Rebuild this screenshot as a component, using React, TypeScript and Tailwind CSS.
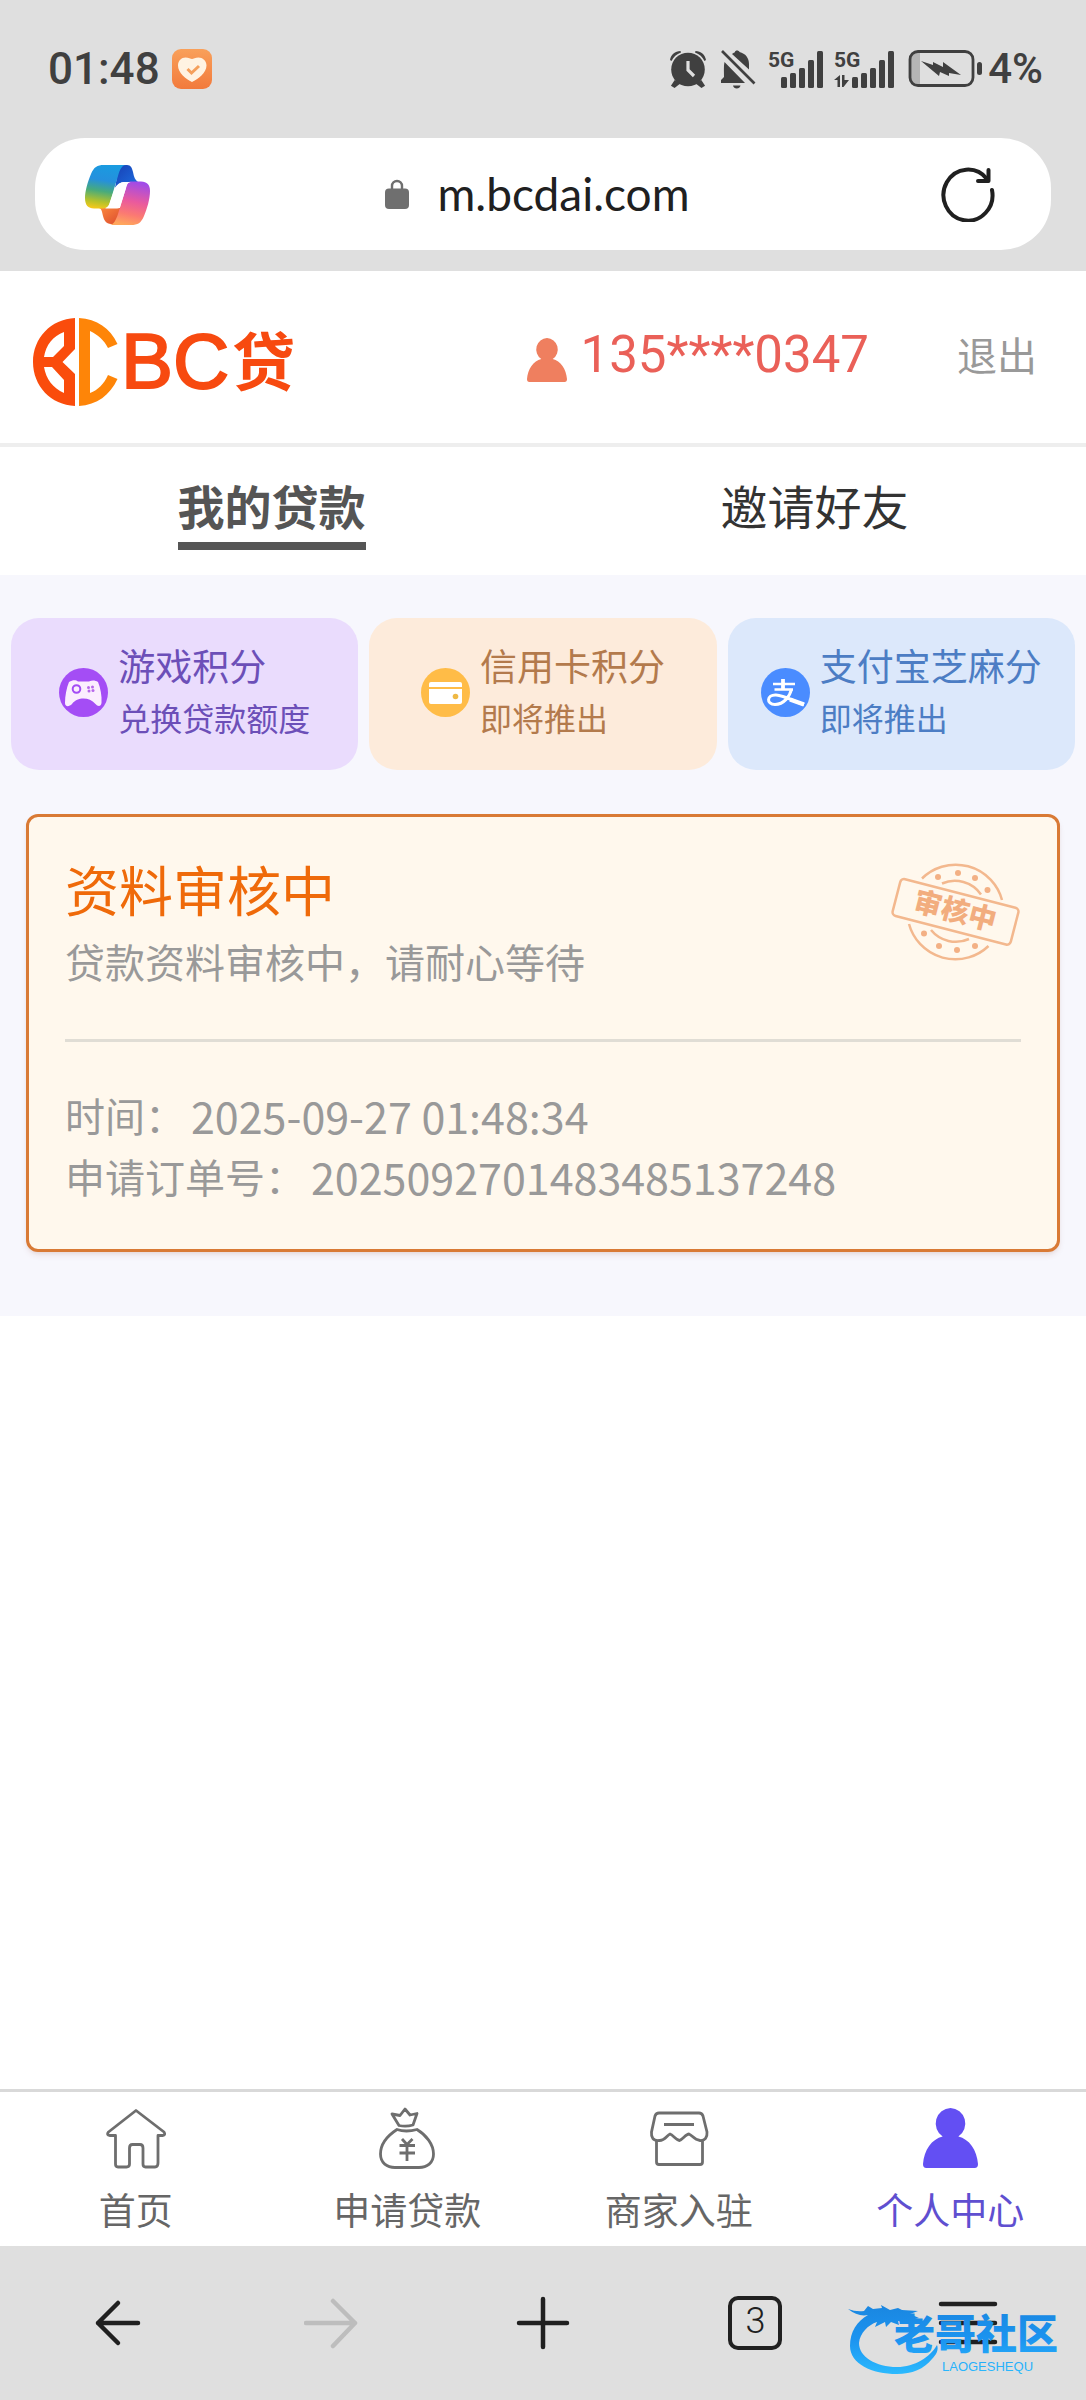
import type { ReactNode } from "react";

const CJK = "font-['Noto_Sans_CJK_SC',sans-serif]";

function HeartBadge() {
  return (
    <svg width="40" height="40" viewBox="0 0 40 40" aria-hidden="true">
      <defs>
        <linearGradient id="badge" x1="0" y1="0" x2="0" y2="1">
          <stop offset="0" stopColor="#f9a05a" />
          <stop offset="1" stopColor="#f27a3c" />
        </linearGradient>
      </defs>
      <rect width="40" height="40" rx="9" fill="url(#badge)" />
      <path d="M20 33C14 30 6 24 6 16.500C6 11.500 9.500 8.500 13.500 8.500C16.500 8.500 18.800 10 20 10C21.200 10 23.500 8.500 26.500 8.500C30.500 8.500 34.500 11.500 34.500 16.500C34.500 24 26 30 20 33Z" fill="#fff3e2" />
      <path d="M15.500 20L19.500 24L27 17" fill="none" stroke="#f5a05c" strokeWidth="3" />
    </svg>
  );
}

function AlarmIcon() {
  return (
    <svg width="36" height="38" viewBox="0 0 36 38" fill="#404040" aria-hidden="true">
      <circle cx="18" cy="19.500" r="16.800" />
      <path d="M0 10C1 4.500 5 1 10.500 1L11 2.500C6.500 4 3.500 7 1.500 11Z" />
      <path d="M36 10C35 4.500 31 1 25.500 1L25 2.500C29.500 4 32.500 7 34.500 11Z" />
      <path d="M5 31L2 35.500L4.500 37L9 33.500ZM31 31L34 35.500L31.500 37L27 33.500Z" stroke="#404040" strokeWidth="1.500" />
      <path d="M18 11V20L24 26" fill="none" stroke="#dfdfdf" strokeWidth="3.200" />
    </svg>
  );
}

function MutedBellIcon() {
  return (
    <svg width="36" height="40" viewBox="0 0 36 40" fill="#404040" aria-hidden="true">
      <path d="M12 5C13.500 4 14.500 3.500 15 3C15 1 19 1 19.500 3C25.500 4.500 29 9 29 15V20.500Z" />
      <path d="M4.500 13L25 34H1V31L4 28C4 23 3.500 17 4.500 13Z" />
      <path d="M13 36.500H20.500C20 40.500 13.500 40.500 13 36.500Z" />
      <path d="M2 2L34.500 34.500" stroke="#404040" strokeWidth="2.600" />
    </svg>
  );
}

function SignalIcon({ data }: { data?: boolean }) {
  return (
    <svg width={data ? 60 : 56} height="40" viewBox={data ? "0 0 60 40" : "0 0 56 40"} fill="#404040" className="overflow-visible" aria-hidden="true">
      <text x="0" y="18" fontSize="21" fontWeight="700" className="font-['Roboto',sans-serif]">5G</text>
      <g transform={data ? "translate(5 0)" : undefined}>
        <rect x="13" y="28" width="6" height="11" rx="1.500" />
        <rect x="22" y="24" width="6" height="15" rx="1.500" />
        <rect x="31" y="19" width="6" height="20" rx="1.500" />
        <rect x="40" y="11" width="6" height="28" rx="1.500" />
        <rect x="49" y="2" width="6" height="37" rx="1.500" />
      </g>
      {data && <path d="M0 31L6 26V38H3.500V31ZM8 26H10.500V31H15L9.500 38H8Z" />}
    </svg>
  );
}

function BatteryIcon() {
  return (
    <svg width="76" height="38" viewBox="0 0 76 38" aria-hidden="true">
      <path d="M9 2H12V35H9Q3 33 3 28V9Q3 3 9 2Z" fill="#b5b5b5" />
      <rect x="2" y="1.500" width="63" height="34" rx="8" fill="none" stroke="#404040" strokeWidth="2.800" />
      <rect x="69" y="12" width="5" height="13" rx="2.500" fill="#404040" />
      <path d="M13 11L25 15V12L35 17V12L53 25L41 23V26L32 22L31 26Z" fill="#404040" />
    </svg>
  );
}

function AssistantIcon() {
  return (
    <svg width="65" height="61" viewBox="0 0 65 61" aria-hidden="true">
      <defs>
        <linearGradient id="ribbonA" x1="0.500" y1="0" x2="0.350" y2="1">
          <stop offset="0" stopColor="#1a9be0" />
          <stop offset="0.350" stopColor="#2590dd" />
          <stop offset="0.600" stopColor="#48ab7c" />
          <stop offset="0.850" stopColor="#b6c22a" />
          <stop offset="1" stopColor="#f2c81c" />
        </linearGradient>
        <linearGradient id="ribbonB" x1="0.600" y1="0" x2="0.400" y2="1">
          <stop offset="0" stopColor="#a04be8" />
          <stop offset="0.450" stopColor="#ea5a9d" />
          <stop offset="0.750" stopColor="#fb7a72" />
          <stop offset="1" stopColor="#ffa75c" />
        </linearGradient>
        <linearGradient id="foldA" x1="0" y1="0" x2="1" y2="1">
          <stop offset="0" stopColor="#1840b5" />
          <stop offset="1" stopColor="#1d6fe0" />
        </linearGradient>
        <linearGradient id="foldB" x1="0" y1="0" x2="1" y2="1">
          <stop offset="0" stopColor="#ff9040" />
          <stop offset="1" stopColor="#d9452c" />
        </linearGradient>
      </defs>
      <path d="M34 1H42C46 1 47 4 48 8C49 13 50 16 53 18H40C36 18 34 19 30 24Z" fill="url(#foldA)" />
      <path d="M14 44H35L40 40L30 60H26C21 60 19 56 18 52C17 48 17 45 14 44Z" fill="url(#foldB)" />
      <path d="M19 1H41C37 1 35 5 33 12L25 38C23.500 43 21 44.500 17 44.500H9C3 44.500 0 41 0 34C0 27 3 17 6 10C9 3 12 1 19 1Z" fill="url(#ribbonA)" />
      <path d="M46 17.500H56C62 17.500 65 21 65 27C65 35 62 45 59 52C56 59 53 61 46 61H25C29 60 31 56 33 50L41 24C42 20 43 17.500 46 17.500Z" fill="url(#ribbonB)" />
      <path d="M40 18H47C43 18 42 20 41 24L35 43Q34 44.500 32 44.500H18C22 44.500 24 43 25 38L30 24Q33 18 40 18Z" fill="#fff" />
    </svg>
  );
}

function LockIcon() {
  return (
    <svg width="24" height="30" viewBox="0 0 24 30" aria-hidden="true">
      <path d="M7 11V7A5 5 0 0 1 17 7V11" fill="none" stroke="#6f6f6f" strokeWidth="2.400" />
      <rect y="9.500" width="24" height="20.500" rx="4" fill="#6f6f6f" />
    </svg>
  );
}

function ReloadIcon() {
  return (
    <svg width="54" height="56" viewBox="0 0 54 56" fill="none" stroke="#202020" strokeWidth="4" strokeLinecap="round" strokeLinejoin="round" aria-hidden="true">
      <path d="M51 24A24.500 25.500 0 1 1 46 13" />
      <path d="M47.500 4V15H37" />
    </svg>
  );
}

function Logo() {
  return (
    <svg width="264" height="88" viewBox="0 0 264 88" className="overflow-visible" role="img" aria-label="BC贷">
      <path fillRule="evenodd" fill="#fa4c0c" d="M42 0V31L29.500 44L42 56V88C18 87 0 68 0 44C0 20 18 1 42 0ZM31 14C20 18 13 27 11 39H20L31 28ZM11 49C13 61 20 70 31 75V62L19 49Z" />
      <path fill="#fe8508" d="M46 0C64 1 77 10 84.500 26L75 30C71 22 65 17 57 13V75C65 72 71 66 75 57L84.500 61C77 77 64 87 46 88Z" />
      <text x="88" y="70" fontSize="78" fill="#f74a10" className="font-['Liberation_Sans',sans-serif]" stroke="#f74a10" strokeWidth="2">BC</text>
      <text x="199" y="67" fontSize="63" fontWeight="700" fill="#f74a10" className={CJK}>贷</text>
    </svg>
  );
}

function PersonIcon({ className }: { className: string }) {
  return (
    <svg viewBox="0 0 56 60" preserveAspectRatio="none" className={className} fill="currentColor" aria-hidden="true">
      <path d="M28 0A15.500 15.500 0 0 1 36 28.500C47 31 55 42 56 56C56 58.500 55 60 52.500 60H3.500C1 60 0 58.500 0 56C1 42 9 31 20 28.500A15.500 15.500 0 0 1 28 0Z" />
    </svg>
  );
}

function GameIcon() {
  return (
    <svg width="49" height="49" viewBox="0 0 49 49" className="shrink-0" aria-hidden="true">
      <circle cx="24.500" cy="24.500" r="24.500" fill="#a44df5" />
      <path d="M10 14C14 11.500 17 12 19 13.500H30C33 12 36 12 39 14C41.500 20 43 28 42.500 35C42 39 38.500 38.500 36.500 36C33 32 29 30.500 24.500 30.500C20 30.500 16 32 13 36C10 39 6 39 6 35C6 28 7.500 20 10 14Z" fill="#fbeefe" />
      <circle cx="17.500" cy="21" r="3.800" fill="none" stroke="#a44df5" strokeWidth="2" />
      <g fill="#b768ea">
        <circle cx="29.500" cy="19.500" r="1.500" />
        <circle cx="33.500" cy="19" r="1.500" />
        <circle cx="30" cy="23" r="1.500" />
        <circle cx="34" cy="22.500" r="1.500" />
      </g>
    </svg>
  );
}

function WalletIcon() {
  return (
    <svg width="49" height="49" viewBox="0 0 49 49" className="shrink-0" aria-hidden="true">
      <circle cx="24.500" cy="24.500" r="24.500" fill="#ffbc47" />
      <path d="M8 16Q8 14 10 14H39Q41 14 41 16V19H8Z" fill="#fff" />
      <path d="M8 21H41V34Q41 36 39 36H10Q8 36 8 34Z" fill="#fff" />
      <circle cx="34.500" cy="28.500" r="2.800" fill="#efb944" />
    </svg>
  );
}

function AlipayIcon() {
  return (
    <svg width="49" height="49" viewBox="0 0 49 49" className="shrink-0" aria-hidden="true">
      <circle cx="24.500" cy="24.500" r="24.500" fill="#4a8cff" />
      <g fill="none" stroke="#fff">
        <path d="M12 16H34M13.500 21.500H32" strokeWidth="2.400" />
        <path d="M22 11V21" strokeWidth="3.800" />
        <path d="M30.500 21C29 28 23 36.500 14 36.500C5 36.500 5.500 26.500 15 27C24 27.500 32 33 43 36.500" strokeWidth="3" />
        <path d="M29 31.500L43 36.500" strokeWidth="4.500" />
      </g>
    </svg>
  );
}

function ReviewStamp() {
  const stars = [
    [47, 14], [67, 10], [84, 15], [96.500, 27], [33, 70.500], [48, 83], [66, 87], [84, 83],
  ];
  return (
    <svg width="130" height="98" viewBox="0 0 130 98" fill="none" stroke="#f3b88e" strokeWidth="2.500" className="shrink-0" role="img" aria-label="审核中">
      <path d="M31 15.500A48 48 0 0 1 111 37M18 61A48 48 0 0 0 97.500 83" />
      <path d="M51 20.500A32 32 0 0 1 90 31.500M40 67A32 32 0 0 0 78 76" />
      <g fill="#f3b084" stroke="none">
        {stars.map(([x, y]) => (
          <circle key={`${x}-${y}`} cx={x} cy={y} r="3" />
        ))}
      </g>
      <g transform="rotate(14.500 65 49)">
        <rect x="3.500" y="30" width="122" height="38" rx="4" />
        <text x="64" y="58" textAnchor="middle" fontSize="28" fontWeight="900" fill="#f2ad7e" stroke="none" className={CJK}>审核中</text>
      </g>
    </svg>
  );
}

function HomeIcon() {
  return (
    <svg width="62" height="62" viewBox="0 0 62 62" fill="none" stroke="#6e6e6e" strokeWidth="2.800" strokeLinejoin="round" aria-hidden="true">
      <path d="M31 3.500L59 25Q61 28 57.500 28.500H53V56Q53 60 50 60H40.500Q38 60 38 57V41Q38 37.500 35 37.500H27.500Q24.500 37.500 24.500 41V57Q24.500 60 21.500 60H13Q10.500 60 10.500 57V28.500H5Q1 28 3.500 25Z" />
    </svg>
  );
}

function MoneyBagIcon() {
  return (
    <svg width="62" height="62" viewBox="0 0 62 62" fill="none" stroke="#6e6e6e" strokeWidth="2.800" strokeLinejoin="round" aria-hidden="true">
      <path d="M23 18.500L16 7L24 8.500L29 2L34 8L41 6.500L37 18Q30 20 23 18.500Z" />
      <path d="M21 22.500Q30 25.500 41 22.500C50 28 57.500 37 57.500 47C57.500 56 51 60.500 43 60.500H19C11 60.500 4.500 56 4.500 47C4.500 37 11 29 21 22.500Z" />
      <path d="M26 32L31 37.500L36.500 32M23.500 38.500H39M23.500 46H39M31 38V54" />
    </svg>
  );
}

function StoreIcon() {
  return (
    <svg width="62" height="62" viewBox="0 0 62 62" fill="none" stroke="#6e6e6e" strokeWidth="2.800" strokeLinejoin="round" aria-hidden="true">
      <path d="M11 6H51Q54 6 55 9L59 25C59.500 30 57 34 52 33.500C46 33 44 28 41 27C38 27 35 32 31.500 33.500C28 33 25 28 22 27C19 28 17 34 11 33.500C5 34 3 30 3.500 25L7 9Q8 6 11 6Z" />
      <path d="M8.500 33V55Q8.500 57.500 11 57.500H52Q54.500 57.500 54.500 55V33" />
      <path d="M16 17.500H46" strokeWidth="3" />
    </svg>
  );
}

function Watermark() {
  return (
    <svg width="226" height="74" viewBox="0 0 226 74" role="img" aria-label="老哥社区">
      <defs>
        <linearGradient id="dragon" x1="0" y1="0" x2="0" y2="72" gradientUnits="userSpaceOnUse">
          <stop offset="0" stopColor="#1a86e0" />
          <stop offset="0.500" stopColor="#1c94f0" />
          <stop offset="1" stopColor="#2cbcff" />
        </linearGradient>
      </defs>
      <g fill="url(#dragon)">
        <path d="M0 5Q8 8 16 7L20 2L25 5L34 4L33 1L42 6L50 4L54 6L70 7L62 10L71 14L67 15L71 17L59 16L61 20L50 17L51 21L43 18L38 23L37 18L27 23L29 18C20 21 12 29 11 39C11 53 28 63 49 63C67 63 82 53 89 41C91 46 88 51 84 55C76 65 64 70 49 70C24 70 2 60 2 42C2 28 9 17 20 11Q10 13 0 5Z" />
        <text x="46" y="45" fontSize="41" fontWeight="900" className={CJK}>老哥社区</text>
        <text x="94" y="67" fontSize="13" className="font-['Liberation_Sans',sans-serif]">LAOGESHEQU</text>
      </g>
    </svg>
  );
}

const lineIcon = {
  fill: "none",
  strokeWidth: 4.5,
  strokeLinecap: "round" as const,
  strokeLinejoin: "round" as const,
  "aria-hidden": true,
};

function ScoreCard({ icon, title, note, tone }: { icon: ReactNode; title: string; note: string; tone: string }) {
  return (
    <button type="button" className={`flex items-center justify-center gap-2.5 rounded-[28px] pt-[21px] pb-[25px] text-left ${tone}`}>
      {icon}
      <span className="flex flex-col pb-0.5 leading-[52px] whitespace-nowrap">
        <span className="text-[37px]">{title}</span>
        <span className="text-[32px]">{note}</span>
      </span>
    </button>
  );
}

function NavItem({ icon, label, active }: { icon: ReactNode; label: string; active?: boolean }) {
  return (
    <a href="#" aria-current={active ? "page" : undefined} className={`flex flex-1 flex-col items-center gap-[15px] text-[37px] leading-[50px] ${active ? "text-[#5f4fd0]" : "text-[#666]"}`}>
      {icon}
      {label}
    </a>
  );
}

export default function App() {
  return (
    <div className={`flex min-h-screen flex-col bg-white ${CJK}`}>
      <div className="bg-[#dfdfdf] px-[35px] pb-[21px]">
        <div className="flex items-center justify-between pt-12 pr-2 pb-12 pl-[13px] font-['Roboto',sans-serif] text-[44px] leading-[42px] font-medium text-[#404040]">
          <div className="flex items-center gap-3">
            <span>01:48</span>
            <HeartBadge />
          </div>
          <div className="flex items-center">
            <AlarmIcon />
            <span className="ml-3.5"><MutedBellIcon /></span>
            <span className="ml-3"><SignalIcon /></span>
            <span className="ml-2.5"><SignalIcon data /></span>
            <span className="ml-3.5"><BatteryIcon /></span>
            <span className="ml-1 text-[42px]">4%</span>
          </div>
        </div>
        <div className="flex h-28 items-center justify-between rounded-[50px] bg-white pr-14 pl-[50px]">
          <button type="button" aria-label="Copilot"><AssistantIcon /></button>
          <button type="button" className="mr-4 flex items-center gap-7 font-['Lato',sans-serif] text-[46px] leading-[56px] text-[#202020]">
            <LockIcon />
            m.bcdai.com
          </button>
          <button type="button" aria-label="刷新"><ReloadIcon /></button>
        </div>
      </div>

      <header className="flex items-center justify-between border-b-4 border-[#eee] pt-[47px] pr-[49px] pb-[37px] pl-[33px]">
        <a href="#"><Logo /></a>
        <div className="flex items-center pb-1">
          <PersonIcon className="h-11 w-10 text-[#ef7f5f]" />
          <span className="ml-3.5 pb-2.5 font-['Roboto',sans-serif] text-[51px] leading-[56px] text-[#ea6058]">135****0347</span>
          <button type="button" className="ml-[88px] pb-3 text-[40px] leading-[56px] text-[#999]">退出</button>
        </div>
      </header>

      <main className="flex-1">
        <div role="tablist" className="grid grid-cols-2 justify-items-center pt-[30px] pb-[25px] text-[47px] leading-[56px]">
          <button type="button" role="tab" aria-selected="true" className="border-b-8 border-[#555] pb-[9px] font-bold text-[#555]">我的贷款</button>
          <button type="button" role="tab" aria-selected="false" className="border-b-8 border-transparent pb-[9px] text-[#333]">邀请好友</button>
        </div>

        <section className="bg-[#f7f7fd] pt-[43px] pb-16">
          <div className="grid grid-cols-3 gap-[11px] px-[11px]">
            <ScoreCard icon={<GameIcon />} title="游戏积分" note="兑换贷款额度" tone="bg-[#eadcfd] text-[#6c4fb8]" />
            <ScoreCard icon={<WalletIcon />} title="信用卡积分" note="即将推出" tone="bg-[#fdebdb] text-[#b37a4c]" />
            <ScoreCard icon={<AlipayIcon />} title="支付宝芝麻分" note="即将推出" tone="bg-[#dce8fb] text-[#4c7dc4]" />
          </div>

          <article className="mx-[26px] mt-11 rounded-[12px] border-3 border-[#d97a35] bg-[#fff8ed] px-9 pt-10 pb-[42px] text-[40px] text-[#999] shadow-md shadow-orange-900/10">
            <div className="flex items-start justify-between border-b-3 border-[#e0ddd5] pb-[50px]">
              <div>
                <h1 className="text-[54px] leading-[64px] text-[#ef6a0a]">资料审核中</h1>
                <p className="mt-3 leading-[56px]">贷款资料审核中，请耐心等待</p>
              </div>
              <span className="mt-1.5"><ReviewStamp /></span>
            </div>
            <dl className="mt-[43px] leading-[61px]">
              <div className="flex items-center gap-1.5">
                <dt>时间：</dt>
                <dd className="text-[43px]">2025-09-27 01:48:34</dd>
              </div>
              <div className="flex items-center gap-1.5">
                <dt>申请订单号：</dt>
                <dd className="text-[43px]">2025092701483485137248</dd>
              </div>
            </dl>
          </article>
        </section>
      </main>

      <nav className="flex border-t-3 border-[#d9d9d9] pt-[15px] pb-3">
        <NavItem icon={<HomeIcon />} label="首页" />
        <NavItem icon={<MoneyBagIcon />} label="申请贷款" />
        <NavItem icon={<StoreIcon />} label="商家入驻" />
        <NavItem icon={<PersonIcon className="my-px h-[60px] w-[55px] text-[#634ff3]" />} label="个人中心" active />
      </nav>

      <footer className="relative grid grid-cols-5 justify-items-center bg-[#dfdfdf] px-3 py-[50px]">
        <button type="button" aria-label="后退">
          <svg width="54" height="54" viewBox="0 0 54 54" stroke="#202020" {...lineIcon}><path d="M27 7L7 27L27 47M7 27H47" /></svg>
        </button>
        <button type="button" aria-label="前进" disabled>
          <svg width="54" height="54" viewBox="0 0 54 54" stroke="#bdbdbd" {...lineIcon}><path d="M29 5L51 27L29 50M2 27H51" /></svg>
        </button>
        <button type="button" aria-label="新建标签页">
          <svg width="54" height="54" viewBox="0 0 54 54" stroke="#202020" {...lineIcon}><path d="M27 3V51M3 27H51" /></svg>
        </button>
        <button type="button" aria-label="标签页" className="flex size-[54px] items-center justify-center rounded-[10px] border-4 border-[#202020] pb-1 font-['Roboto',sans-serif] text-[36px] leading-[42px] font-light text-[#202020]">3</button>
        <button type="button" aria-label="菜单">
          <svg width="60" height="54" viewBox="0 0 60 54" stroke="#202020" {...lineIcon}><path d="M3 8H57M3 27H57M3 46H57" /></svg>
        </button>
        <div className="pointer-events-none absolute right-3 bottom-[22px]"><Watermark /></div>
      </footer>
    </div>
  );
}
